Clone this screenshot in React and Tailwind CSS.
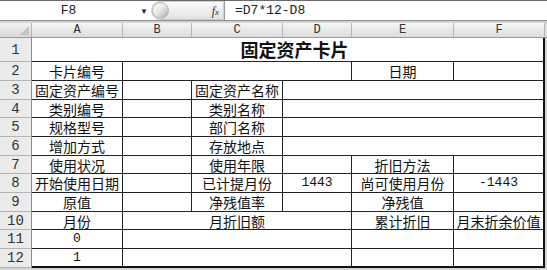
import React from "react";

const cjk = { fontFamily: '"Noto Sans CJK SC", "Noto Sans", sans-serif' };
const mono = { fontFamily: '"Liberation Mono", "DejaVu Sans Mono", monospace' };

// row heights in px for rows 2..12 (border included)
const rowH = [19, 19, 18, 19, 19, 18, 19, 19, 18, 19, 19];

// widths of columns A..F
const W = { A: 91, B: 69, C: 91, D: 69, E: 102, F: 91 };

const rows = [
  [["卡片编号", W.A], ["", W.B + W.C + W.D], ["日期", W.E], ["", W.F]],
  [["固定资产编号", W.A], ["", W.B], ["固定资产名称", W.C], ["", W.D + W.E + W.F]],
  [["类别编号", W.A], ["", W.B], ["类别名称", W.C], ["", W.D + W.E + W.F]],
  [["规格型号", W.A], ["", W.B], ["部门名称", W.C], ["", W.D + W.E + W.F]],
  [["增加方式", W.A], ["", W.B], ["存放地点", W.C], ["", W.D + W.E + W.F]],
  [["使用状况", W.A], ["", W.B], ["使用年限", W.C], ["", W.D], ["折旧方法", W.E], ["", W.F]],
  [["开始使用日期", W.A], ["", W.B], ["已计提月份", W.C], ["1443", W.D, true], ["尚可使用月份", W.E], ["-1443", W.F, true]],
  [["原值", W.A], ["", W.B], ["净残值率", W.C], ["", W.D], ["净残值", W.E], ["", W.F]],
  [["月份", W.A], ["月折旧额", W.B + W.C + W.D], ["累计折旧", W.E], ["月末折余价值", W.F]],
  [["0", W.A, true], ["", W.B + W.C + W.D], ["", W.E], ["", W.F]],
  [["1", W.A, true], ["", W.B + W.C + W.D], ["", W.E], ["", W.F]],
];

function RowHeader({ n, h }) {
  return (
    <div
      className="w-[32px] shrink-0 flex items-center justify-center bg-[#ebebeb] border-r border-b border-r-[#8a8a8a] border-b-[#b4b4b4] text-[14px] leading-[16px] text-[#333]"
      style={{ ...mono, height: h }}
    >
      {n}
    </div>
  );
}

export default function App() {
  const cols = [
    ["A", W.A],
    ["B", W.B],
    ["C", W.C],
    ["D", W.D],
    ["E", W.E],
    ["F", W.F],
  ];

  return (
    <div className="w-[547px] h-[270px] overflow-hidden bg-[#d4d4d4] text-[#111]">
      {/* formula bar */}
      <div className="h-[21px] flex items-stretch bg-white border-t border-b border-t-[#6a6a6a] border-b-[#8c8c8c]">
        <div className="w-[137px] flex items-center justify-center text-[13px] text-[#222]" style={mono}>
          F8
        </div>
        <div className="w-[14px] flex items-center justify-center text-[8px] text-[#222]">▼</div>
        <div className="w-[73px] flex items-center bg-gradient-to-b from-[#fbfbfb] to-[#e2e2e2] rounded-l-full border border-[#cfcfcf]">
          <div className="w-[17px] h-[17px] rounded-full bg-gradient-to-br from-[#ffffff] via-[#e6e6e6] to-[#a8a8a8] border border-[#b4b4b4]" />
          <div className="flex-1" />
          <span className="mr-[4px] text-[12px] italic text-[#333]" style={{ fontFamily: '"Liberation Serif", serif' }}>
            f<span className="text-[9px]">x</span>
          </span>
        </div>
        <div className="flex-1 flex items-center pl-[10px] border-l border-[#9a9a9a] text-[13px] text-[#222]" style={mono}>
          =D7*12-D8
        </div>
      </div>
      <div className="h-[2px]" />

      {/* column headers */}
      <div className="flex h-[15px] border-b border-[#9a9a9a]">
        <div className="w-[32px] shrink-0 relative bg-gradient-to-b from-[#f2f2f2] to-[#d9d9d9] border-r border-[#b4b4b4]">
          <div className="absolute right-[2px] bottom-[2px] w-0 h-0 border-l-[9px] border-l-transparent border-b-[9px] border-b-[#c4c4c4]" />
        </div>
        {cols.map(([c, w]) => (
          <div
            key={c}
            className="shrink-0 flex items-center justify-center bg-gradient-to-b from-[#f6f6f6] to-[#dcdcdc] border-r border-[#b8b8b8] text-[12px] leading-[14px] text-[#333]"
            style={{ ...mono, width: w }}
          >
            {c}
          </div>
        ))}
        <div className="flex-1 bg-[#dcdcdc]" />
      </div>

      {/* row 1 title */}
      <div className="flex">
        <RowHeader n="1" h={24} />
        <div
          className="w-[513px] h-[24px] shrink-0 flex items-end justify-center pl-[14px] pb-[2px] bg-white border-b border-b-[#222] border-r-2 border-r-[#111] text-[18px] leading-[20px] font-bold"
          style={cjk}
        >
          固定资产卡片
        </div>
      </div>

      {/* rows 2..12 */}
      {rows.map((cells, i) => {
        const h = rowH[i];
        const last = i === rows.length - 1;
        return (
          <div key={i} className="flex">
            <RowHeader n={i + 2} h={h} />
            {cells.map(([txt, w, num], j) => {
              const isLastCell = j === cells.length - 1;
              return (
                <div
                  key={j}
                  className={
                    "shrink-0 flex items-center justify-center bg-white border-[#222] whitespace-nowrap leading-[16px] " +
                    (isLastCell ? "border-r-2 border-r-[#111] " : "border-r ") +
                    (last ? "border-b-2 border-b-[#111] " : "border-b ") +
                    (num ? "text-[13px]" : "text-[14px]")
                  }
                  style={{ ...(num ? mono : cjk), width: w, height: h }}
                >
                  {txt}
                </div>
              );
            })}
          </div>
        );
      })}
    </div>
  );
}
